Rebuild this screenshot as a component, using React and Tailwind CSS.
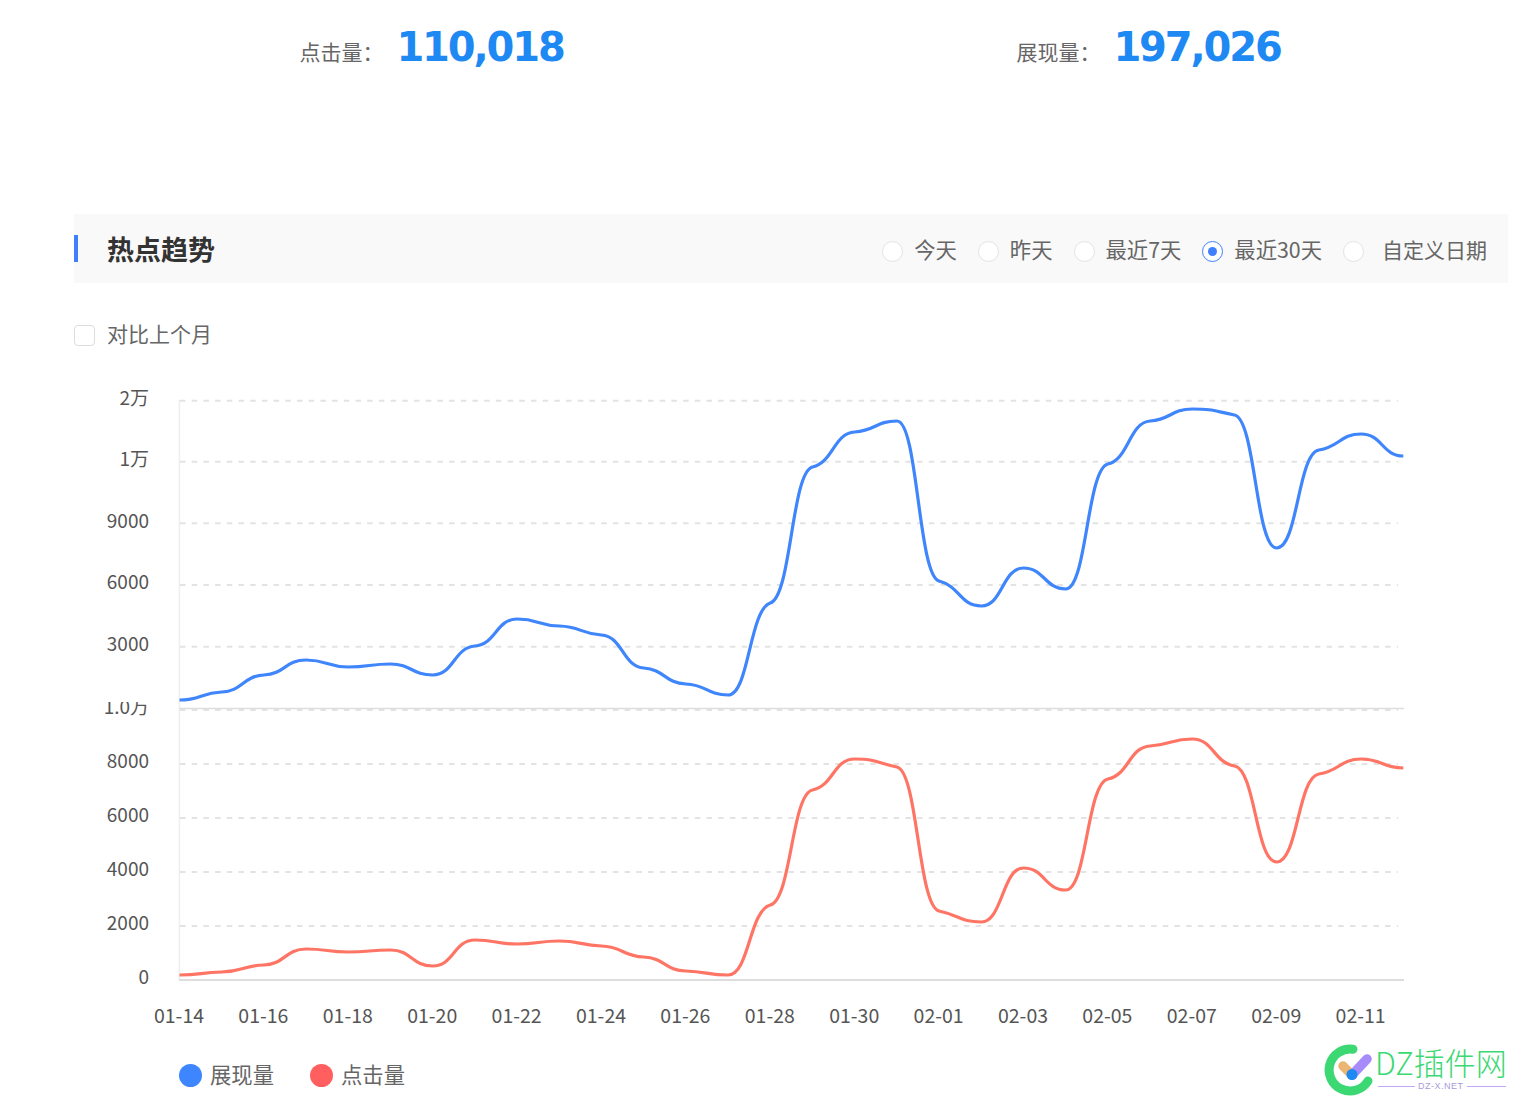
const FONT = "font-['Noto_Sans_CJK_SC','Noto_Sans',sans-serif]";

const X0 = 179.5;
const DX = 42.2;
const blue = [700, 692, 675, 660, 667, 664, 675, 646, 619, 626, 635, 668, 684, 695, 603, 467, 432, 421, 581, 606, 568, 589, 464, 421, 409, 415, 548, 450, 434, 456];
const red = [975, 972, 965, 949, 952, 950, 966, 940, 944, 941, 946, 957, 971, 975, 905, 790, 759, 767, 911, 922, 868, 890, 779, 746, 739, 766, 862, 774, 759, 768];

const curve = (ys, top) => {
  const k = 0.12;
  const pts = ys.map((y, i) => [X0 + DX * i, y - top]);
  const slope = (i) => {
    if (i === 0 || i === pts.length - 1) return 0;
    const a = pts[i][1] - pts[i - 1][1];
    const b = pts[i + 1][1] - pts[i][1];
    if (a * b <= 0) return 0;
    return (k * (a + b)) / (2 * DX);
  };
  let d = `M${pts[0][0]} ${pts[0][1]}`;
  for (let i = 0; i < pts.length - 1; i++) {
    const h = DX * 0.5;
    const [x1, y1] = pts[i];
    const [x2, y2] = pts[i + 1];
    d += ` C${(x1 + h).toFixed(1)} ${(y1 + slope(i) * h).toFixed(1)} ${(x2 - h).toFixed(1)} ${(y2 - slope(i + 1) * h).toFixed(1)} ${x2.toFixed(1)} ${y2}`;
  }
  return d;
};

const TOP = 385;
const topGrid = [
  ["2万", 400.7, 405],
  ["1万", 461.7, 466],
  ["9000", 523.3, 528],
  ["6000", 585, 589],
  ["3000", 646.7, 651],
];
const bottomGrid = [
  ["8000", 764, 768],
  ["6000", 818, 822],
  ["4000", 872, 876],
  ["2000", 926, 930],
];
const xLabels = ["01-14", "01-16", "01-18", "01-20", "01-22", "01-24", "01-26", "01-28", "01-30", "02-01", "02-03", "02-05", "02-07", "02-09", "02-11"];

function Stat({ label, value }) {
  return (
    <div className="flex items-start justify-center pr-[2px]">
      <span className="mt-[36px] w-[97px] text-[21px] leading-[30px] text-[#666666]">{label}</span>
      <span className="mt-[21.5px] font-['DejaVu_Sans',sans-serif] text-[40px] leading-[50px] font-bold tracking-[-2.15px] text-[#1e88f3]">{value}</span>
    </div>
  );
}

function Radio({ label, checked, wide }) {
  return (
    <div className="flex items-center">
      <span
        className={`mt-[5px] flex h-[21px] w-[21px] items-center justify-center rounded-full border bg-white ${checked ? "border-[#4080ff]" : "border-[#e3e3e3]"}`}
      >
        {checked && <span className="h-[9px] w-[9px] rounded-full bg-[#4080ff]" />}
      </span>
      <span
        className={`${wide ? "ml-[18px] text-[21px]" : "ml-[11px] text-[21.33px]"} mt-[1px] leading-[30px] text-[#666666]`}
      >
        {label}
      </span>
    </div>
  );
}

function Chart() {
  return (
    <svg width="1525" height="665" viewBox="0 0 1525 665" className={`block ${FONT}`}>
      <defs>
        <clipPath id="clipLabel">
          <rect x="100" y={702 - TOP} width="60" height="20" />
        </clipPath>
      </defs>
      <g fontSize="19" fill="#555555" textAnchor="end">
        {topGrid.map(([t, y, b]) => (
          <text key={t} x="149" y={b - TOP}>
            {t}
          </text>
        ))}
        <text x="149" y={714 - TOP} clipPath="url(#clipLabel)">
          1.0万
        </text>
        {bottomGrid.map(([t, y, b]) => (
          <text key={t} x="149" y={b - TOP}>
            {t}
          </text>
        ))}
        <text x="149" y={984 - TOP}>
          0
        </text>
      </g>
      <line x1="179.4" x2="179.4" y1={400 - TOP} y2={980 - TOP} stroke="#eeeeee" strokeWidth="1.5" />
      <g stroke="#e3e3e3" strokeWidth="2" strokeDasharray="5.5 6.2">
        {[...topGrid, ["a", 710], ...bottomGrid].map(([t, y]) => (
          <line key={`${t}${y}`} x1="180" x2="1398" y1={y - TOP} y2={y - TOP} />
        ))}
      </g>
      <line x1="179" x2="1404" y1={708.5 - TOP} y2={708.5 - TOP} stroke="#dddddd" strokeWidth="1.5" />
      <line x1="179" x2="1404" y1={980 - TOP} y2={980 - TOP} stroke="#dddddd" strokeWidth="2" />
      <path d={curve(blue, TOP)} fill="none" stroke="#3f85fb" strokeWidth="3.2" />
      <path d={curve(red, TOP)} fill="none" stroke="#ff7565" strokeWidth="3.2" />
      <g fontSize="19.5" fill="#555555" textAnchor="middle">
        {xLabels.map((t, i) => (
          <text key={t} x={X0 + DX * 2 * i - 0.5} y={1023 - TOP}>
            {t}
          </text>
        ))}
      </g>
    </svg>
  );
}

function Legend({ color, label }) {
  return (
    <div className="flex items-center gap-[8px]">
      <span className={`h-[23px] w-[23px] rounded-full ${color}`} />
      <span className="-mt-[2px] text-[21.33px] leading-[30px] text-[#666666]">{label}</span>
    </div>
  );
}

function Watermark() {
  return (
    <div className="absolute top-[1040px] left-[1320px] h-[60px] w-[195px]">
      <svg width="56" height="60" viewBox="0 0 56 60" className="absolute top-0 left-0">
        <path d="M33 9.2 A21 21 0 1 0 48 41" fill="none" stroke="#3bd873" strokeWidth="9" strokeLinecap="round" />
        <line x1="23" y1="26" x2="32" y2="35" stroke="#ebb672" strokeWidth="9.5" strokeLinecap="round" />
        <line x1="32" y1="35" x2="47" y2="19" stroke="#a78bfa" strokeWidth="9.5" strokeLinecap="round" />
        <circle cx="32" cy="34.5" r="5.5" fill="#1e88f3" />
      </svg>
      <span className="absolute top-[5px] left-[55px] font-['Noto_Sans_CJK_SC',sans-serif] text-[31px] leading-[34px] font-light whitespace-nowrap text-[#3bd873]">
        DZ插件网
      </span>
      <div className="absolute top-[40px] left-[58px] flex items-center gap-[3px]">
        <span className="h-px w-[37px] bg-[#c4a8f5]" />
        <span className="font-['Liberation_Sans',sans-serif] text-[9px] leading-[12px] tracking-[0.5px] whitespace-nowrap text-[#a79bd8]">DZ-X.NET</span>
        <span className="h-px w-[39px] bg-[#c4a8f5]" />
      </div>
    </div>
  );
}

export default function App() {
  return (
    <div className={`relative h-[1110px] w-[1525px] overflow-hidden bg-white ${FONT}`}>
      <div className="ml-[74px] grid h-[214px] w-[1434px] grid-cols-2 content-start">
        <Stat label="点击量：" value="110,018" />
        <Stat label="展现量：" value="197,026" />
      </div>
      <div className="ml-[74px] flex h-[69px] w-[1434px] items-center justify-between bg-[#f9f9f9] pr-[21px]">
        <div className="flex items-center">
          <span className="h-[27px] w-[4px] bg-[#4080ff]" />
          <span className="mt-[1px] ml-[29px] text-[27px] leading-[36px] font-bold text-[#333333]">热点趋势</span>
        </div>
        <div className="flex items-center gap-[21px]">
          <Radio label="今天" />
          <Radio label="昨天" />
          <Radio label="最近7天" />
          <Radio label="最近30天" checked />
          <Radio label="自定义日期" wide />
        </div>
      </div>
      <div className="mt-[42px] ml-[74px] flex h-[21px] items-center gap-[12px]">
        <span className="h-[21px] w-[21px] rounded-[4px] border border-[#dddddd] bg-white" />
        <span className="-mt-[6px] text-[21px] leading-[30px] text-[#666666]">对比上个月</span>
      </div>
      <div className="mt-[39px]">
        <Chart />
      </div>
      <div className="mt-[11px] ml-[179px] flex items-center gap-[36px]">
        <Legend color="bg-[#3d86ff]" label="展现量" />
        <Legend color="bg-[#ff5f5f]" label="点击量" />
      </div>
      <Watermark />
    </div>
  );
}
